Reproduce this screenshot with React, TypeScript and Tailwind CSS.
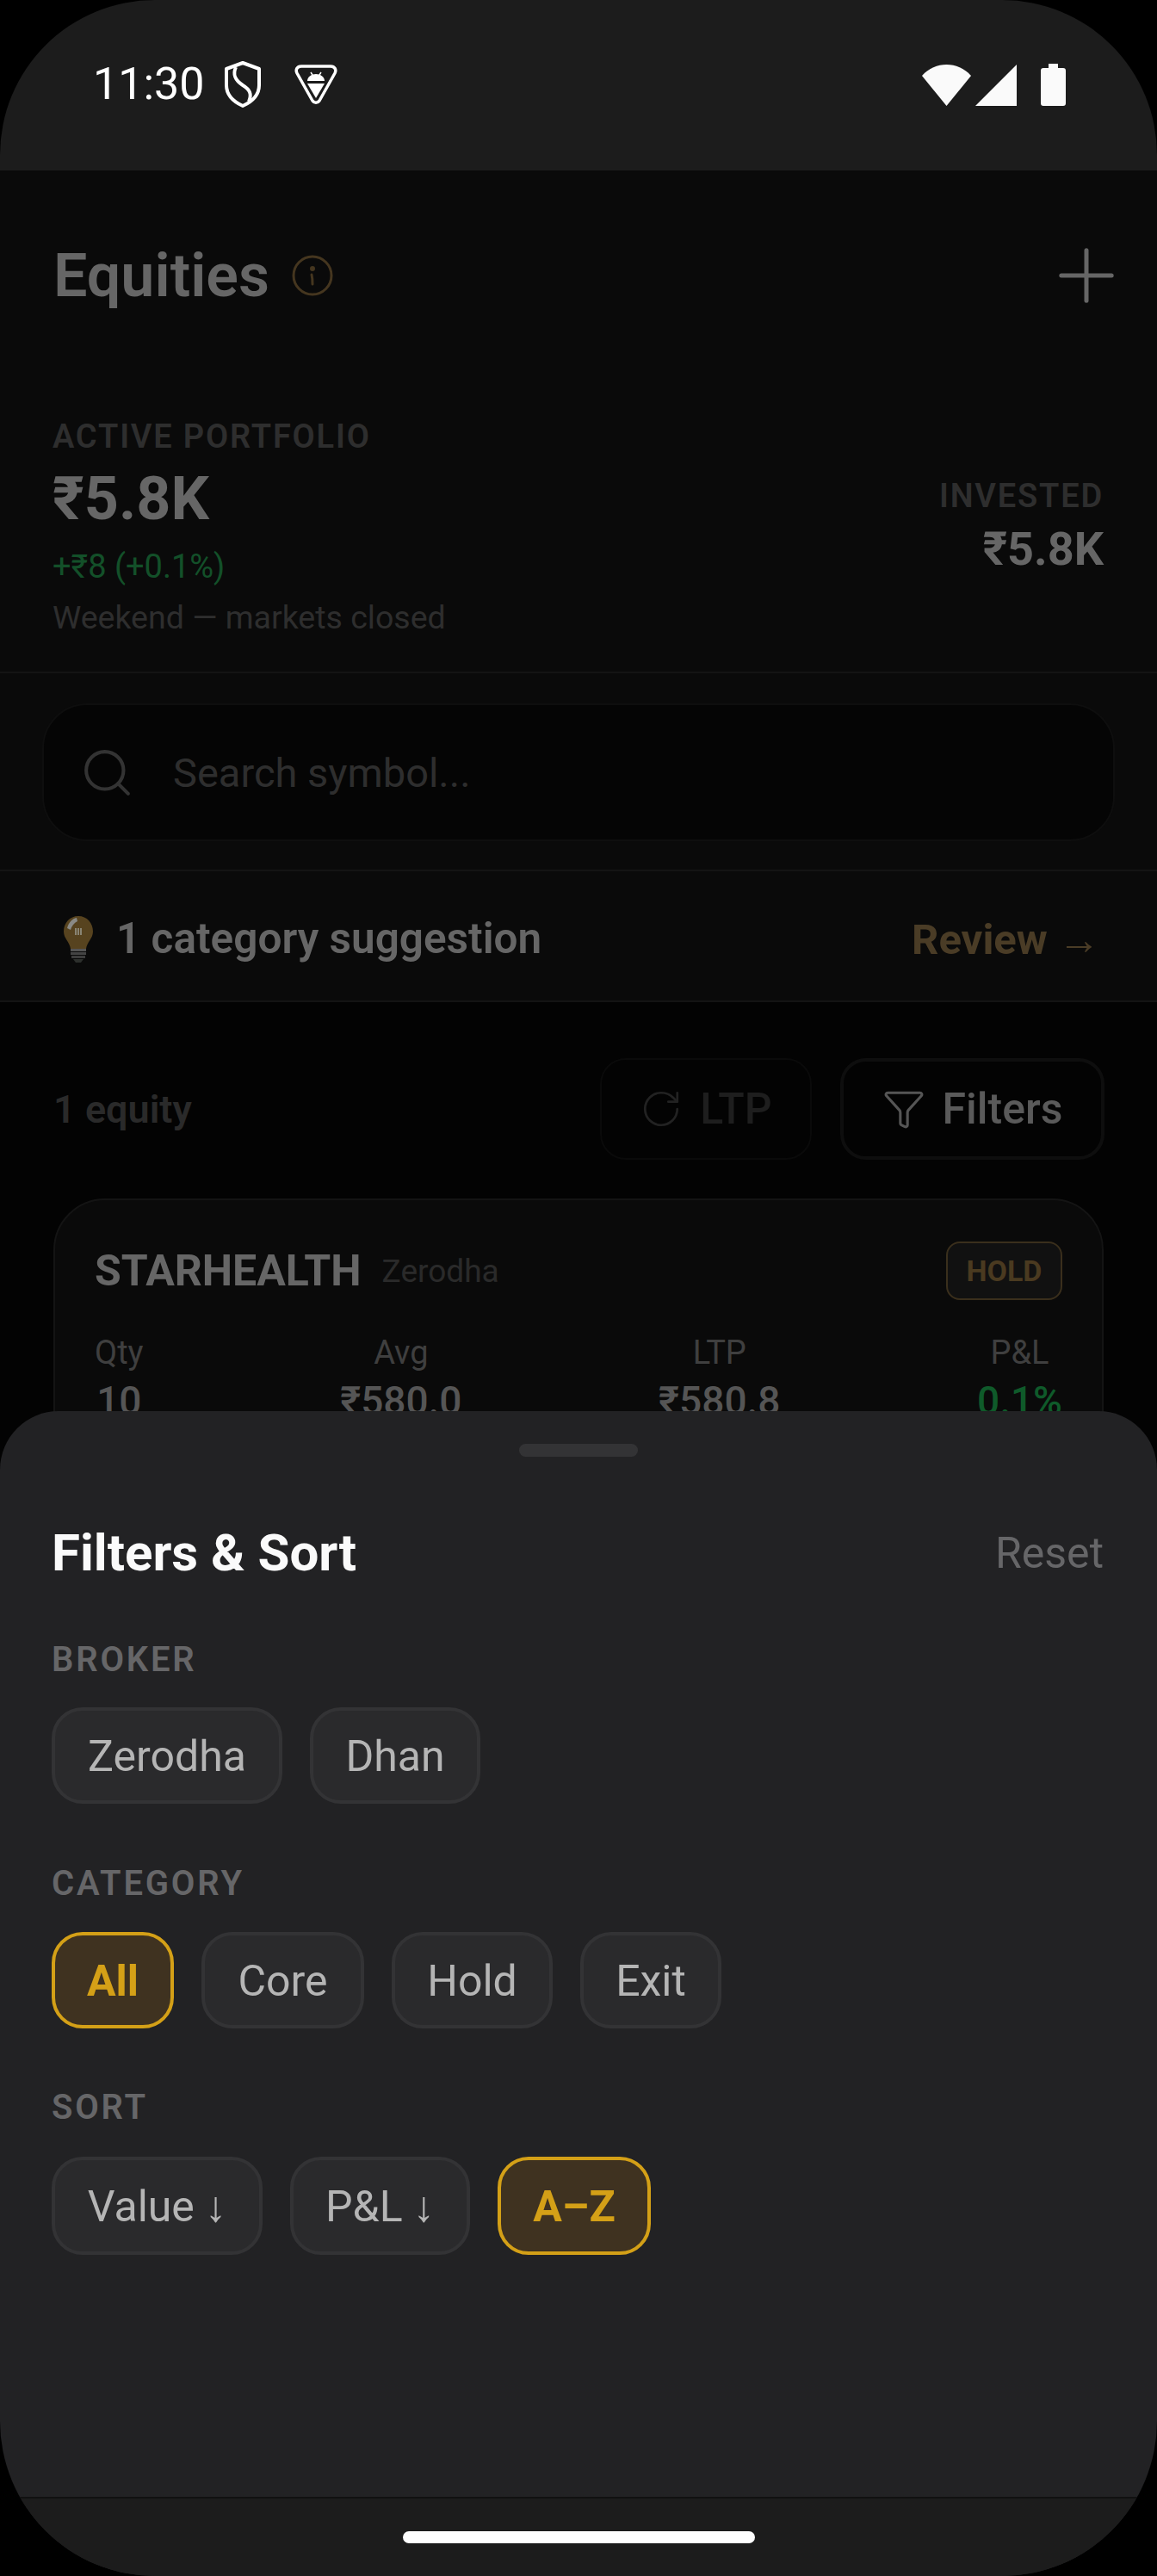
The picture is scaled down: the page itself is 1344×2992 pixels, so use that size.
import { Plus, Search, RotateCw, Funnel } from "lucide-react";

const chipBase =
  "flex items-center justify-center rounded-[36px] border-4 pt-[2px] text-[50px] leading-none";

const Chip = ({ label, active, w, h = "h-[112px]" }: { label: string; active?: boolean; w: string; h?: string }) => (
  <div
    className={`${chipBase} ${w} ${h} ${
      active
        ? "border-[#d4a017] bg-[#3f3220] font-bold text-[#d4a017]"
        : "border-[#333335] bg-[#2a2a2c] text-[#b5b5b5]"
    }`}
  >
    {label}
  </div>
);

const SectionLabel = ({ children }: { children: string }) => (
  <div className="text-[40px] leading-[48px] font-semibold tracking-[2.8px] text-[#666668]">{children}</div>
);

const ShieldIcon = () => (
  <svg width="44" height="54" viewBox="0 0 44 54" fill="none" stroke="#fff" strokeWidth="4">
    <path d="M22 2 L41 9 V28 C41 39 33 47 22 52 C11 47 3 39 3 28 V9 Z" strokeLinejoin="round" />
    <path d="M14 7 C10 16 13 22 22 28 C30 33 33 38 29 47" strokeWidth="4" />
  </svg>
);

const AndroidTriangleIcon = () => (
  <svg width="50" height="48" viewBox="0 0 50 48" fill="none">
    <path
      d="M8 3 H42 C47 3 49 7 47 11 L29 43 C27 46 23 46 21 43 L3 11 C1 7 3 3 8 3 Z"
      stroke="#fff"
      strokeWidth="3.5"
      strokeLinejoin="round"
    />
    <path d="M15 20 C15 15 20 12 25 12 C30 12 35 15 35 20 Z" fill="#fff" />
    <path d="M19 10 L21 13 M31 10 L29 13" stroke="#fff" strokeWidth="1.5" />
    <path d="M15 23 H35 L25 40 Z" fill="#fff" />
  </svg>
);

const WifiIcon = () => (
  <svg width="57" height="48" viewBox="0 0 57 48">
    <path d="M0 13 C8 4 18 0 28.5 0 C39 0 49 4 57 13 L28.5 48 Z" fill="#fafafa" />
  </svg>
);

const SignalIcon = () => (
  <svg width="48" height="48" viewBox="0 0 48 48">
    <path d="M48 0 V48 H0 Z" fill="#fafafa" />
  </svg>
);

const BatteryIcon = () => (
  <svg width="29" height="49" viewBox="0 0 29 49">
    <path d="M9 0 H20 V5 H26 C28 5 29 6 29 8 V46 C29 48 28 49 26 49 H3 C1 49 0 48 0 46 V8 C0 6 1 5 3 5 H9 Z" fill="#fafafa" />
  </svg>
);

const InfoIcon = () => (
  <svg width="48" height="48" viewBox="0 0 48 48" fill="none" stroke="#45361f" strokeWidth="3">
    <circle cx="24" cy="24" r="22" />
    <circle cx="24" cy="16" r="1.5" fill="#45361f" />
    <path d="M23 23 C24 27 24 30 24 34" strokeLinecap="round" />
  </svg>
);

const BulbIcon = () => (
  <svg width="36" height="54" viewBox="0 0 36 54">
    <path d="M18 0 C28 0 35 8 35 18 C35 26 28 30 27 38 H9 C8 30 1 26 1 18 C1 8 8 0 18 0 Z" fill="#57431f" />
    <path d="M5 14 C7 7 11 3 16 2 L17 6 C13 8 10 12 9 16 Z" fill="#8a8a86" />
    <path d="M15 14 V22 M18 14 V22 M21 14 V22" stroke="#9a9a90" strokeWidth="1.5" />
    <rect x="9" y="38" width="18" height="3" fill="#555" />
    <rect x="9" y="42" width="18" height="3" fill="#444" />
    <rect x="10" y="46" width="16" height="3" fill="#3d3d3d" />
    <path d="M12 50 H24 L21 54 H15 Z" fill="#2c2f2c" />
  </svg>
);

const Metric = ({ label, value, valueColor }: { label: string; value: string; valueColor: string }) => (
  <div className="flex flex-col items-center">
    <span className="text-[38px] leading-[44px] text-[#3f3f3f]">{label}</span>
    <span className={`mt-[7px] text-[46px] leading-[54px] font-medium ${valueColor}`}>{value}</span>
  </div>
);

export default function App() {
  return (
    <div className="h-[2992px] w-[1344px] bg-black font-['Roboto',sans-serif]">
      <div className="relative flex h-full flex-col overflow-hidden rounded-[180px] bg-[#030303]">
        {/* status bar */}
        <div className="flex h-[198px] shrink-0 items-start justify-between bg-[#1c1c1c] pt-[66px] pr-[106px] pl-[108px]">
          <div className="flex items-center">
            <span className="text-[52px] leading-[64px] text-white">11:30</span>
            <span className="ml-[22px]">
              <ShieldIcon />
            </span>
            <span className="ml-[38px]">
              <AndroidTriangleIcon />
            </span>
          </div>
          <div className="flex items-center pt-[8px]">
            <WifiIcon />
            <span className="ml-[5px]">
              <SignalIcon />
            </span>
            <span className="ml-[28px]">
              <BatteryIcon />
            </span>
          </div>
        </div>

        {/* dimmed page */}
        <div className="bg-[#0a0a0a]">
          <div className="flex h-[244px] items-center justify-between pr-[32px] pl-[62px]">
            <div className="flex items-center">
              <span className="text-[70px] leading-none font-semibold text-[#666]">Equities</span>
              <span className="ml-[26px]">
                <InfoIcon />
              </span>
            </div>
            <Plus size={100} strokeWidth={1.2} className="text-[#666]" />
          </div>

          <div className="flex h-[340px] items-start justify-between border-b-2 border-[#141414] pt-[43px] pr-[62px] pl-[61px]">
            <div className="flex flex-col">
              <span className="text-[38px] leading-[44px] font-semibold tracking-[1.8px] text-[#2e2e2e]">ACTIVE PORTFOLIO</span>
              <span className="mt-[10px] text-[70px] leading-[80px] font-bold text-[#666]">₹5.8K</span>
              <span className="mt-[17px] text-[38px] leading-[44px] text-[#135029]">+₹8 (+0.1%)</span>
              <span className="mt-[15px] text-[37.5px] leading-[44px] text-[#2e2e2e]">Weekend — markets closed</span>
            </div>
            <div className="flex flex-col items-end pt-[69px]">
              <span className="text-[38px] leading-[44px] font-semibold tracking-[1.8px] text-[#2e2e2e]">INVESTED</span>
              <span className="mt-[8px] text-[54px] leading-[64px] font-bold text-[#666]">₹5.8K</span>
            </div>
          </div>

          <div className="h-[230px] border-b-2 border-[#141414] pt-[35px] pr-[49px] pl-[49px]">
            <div className="flex h-[160px] items-center rounded-[52px] border-2 border-[#0e0e0e] bg-[#050505] pl-[41px]">
              <Search size={65} strokeWidth={1.5} className="text-[#333]" />
              <span className="ml-[44px] text-[47px] leading-none text-[#2e2e2e]">Search symbol...</span>
            </div>
          </div>

          <div className="flex h-[150px] items-center justify-between pt-[8px] pr-[66px] pl-[73px]">
            <div className="flex items-center">
              <BulbIcon />
              <span className="ml-[26px] text-[49.5px] leading-none font-semibold text-[#666]">1 category suggestion</span>
            </div>
            <span className="text-[49px] leading-none font-bold text-[#4a3c26]">Review →</span>
          </div>
        </div>

        <div className="border-t-2 border-[#141414] px-[62px]">
          <div className="-mr-[1px] flex h-[228px] items-center justify-between pt-[20px]">
            <span className="text-[45px] leading-none font-semibold text-[#2a2a2a]">1 equity</span>
            <div className="flex gap-[33px]">
              <div className="flex h-[118px] w-[246px] items-center justify-center gap-[20px] rounded-[30px] border-2 border-[#0a0a0a]">
                <RotateCw size={50} strokeWidth={1.3} className="text-[#222]" />
                <span className="text-[50px] leading-none font-medium text-[#1e1e1e]">LTP</span>
              </div>
              <div className="flex h-[118px] w-[307px] items-center justify-center gap-[20px] rounded-[30px] border-4 border-[#0e0e0e]">
                <Funnel size={50} strokeWidth={1.5} className="text-[#555]" />
                <span className="text-[50px] leading-none font-medium text-[#5a5a5a]">Filters</span>
              </div>
            </div>
          </div>

          <div className="h-[400px] rounded-[60px] border-2 border-[#141414] bg-[#0a0a0a] pt-[46px] pr-[46px] pl-[46px]">
            <div className="flex h-[72px] items-center justify-between">
              <div className="flex items-center">
                <span className="text-[50px] leading-none font-bold text-[#666]">STARHEALTH</span>
                <span className="ml-[24px] text-[37px] leading-none text-[#2a2a2a]">Zerodha</span>
              </div>
              <div className="flex h-[68px] w-[135px] items-center justify-center rounded-[16px] border-2 border-[#3a2f1c] bg-[#111] text-[34px] leading-none font-bold text-[#4a3a20]">
                HOLD
              </div>
            </div>
            <div className="mt-[37px] flex justify-between">
              <Metric label="Qty" value="10" valueColor="text-[#555]" />
              <Metric label="Avg" value="₹580.0" valueColor="text-[#555]" />
              <Metric label="LTP" value="₹580.8" valueColor="text-[#555]" />
              <Metric label="P&L" value="0.1%" valueColor="text-[#0f5a2a]" />
            </div>
          </div>
        </div>

        {/* filter sheet */}
        <div className="absolute right-0 bottom-0 left-0 flex h-[1353px] flex-col rounded-t-[68px] bg-[#222224]">
          <div className="mx-auto mt-[38px] h-[15px] w-[138px] rounded-full bg-[#333335]" />
          <div className="mt-[76px] flex items-center justify-between pr-[62px] pl-[60px]">
            <span className="text-[60px] leading-[72px] font-bold text-[#fafafa]">Filters &amp; Sort</span>
            <span className="text-[50px] leading-[72px] text-[#666668]">Reset</span>
          </div>

          <div className="mt-[64px] flex-1 pl-[60px]">
            <SectionLabel>BROKER</SectionLabel>
            <div className="mt-[31px] flex gap-[32px]">
              <Chip label="Zerodha" w="w-[268px]" />
              <Chip label="Dhan" w="w-[198px]" />
            </div>

            <div className="mt-[69px]">
              <SectionLabel>CATEGORY</SectionLabel>
            </div>
            <div className="mt-[32px] flex gap-[32px]">
              <Chip label="All" active w="w-[142px]" />
              <Chip label="Core" w="w-[189px]" />
              <Chip label="Hold" w="w-[187px]" />
              <Chip label="Exit" w="w-[164px]" />
            </div>

            <div className="mt-[68px]">
              <SectionLabel>SORT</SectionLabel>
            </div>
            <div className="mt-[33px] flex gap-[32px]">
              <Chip label="Value ↓" w="w-[245px]" h="h-[114px]" />
              <Chip label="P&L ↓" w="w-[209px]" h="h-[114px]" />
              <Chip label="A–Z" active w="w-[178px]" h="h-[114px]" />
            </div>
          </div>

          <div className="flex h-[92px] shrink-0 justify-center border-t-2 border-[#111] bg-[#1c1c1c] pt-[38px]">
            <div className="h-[14px] w-[409px] rounded-full bg-white" />
          </div>
        </div>
      </div>
    </div>
  );
}
